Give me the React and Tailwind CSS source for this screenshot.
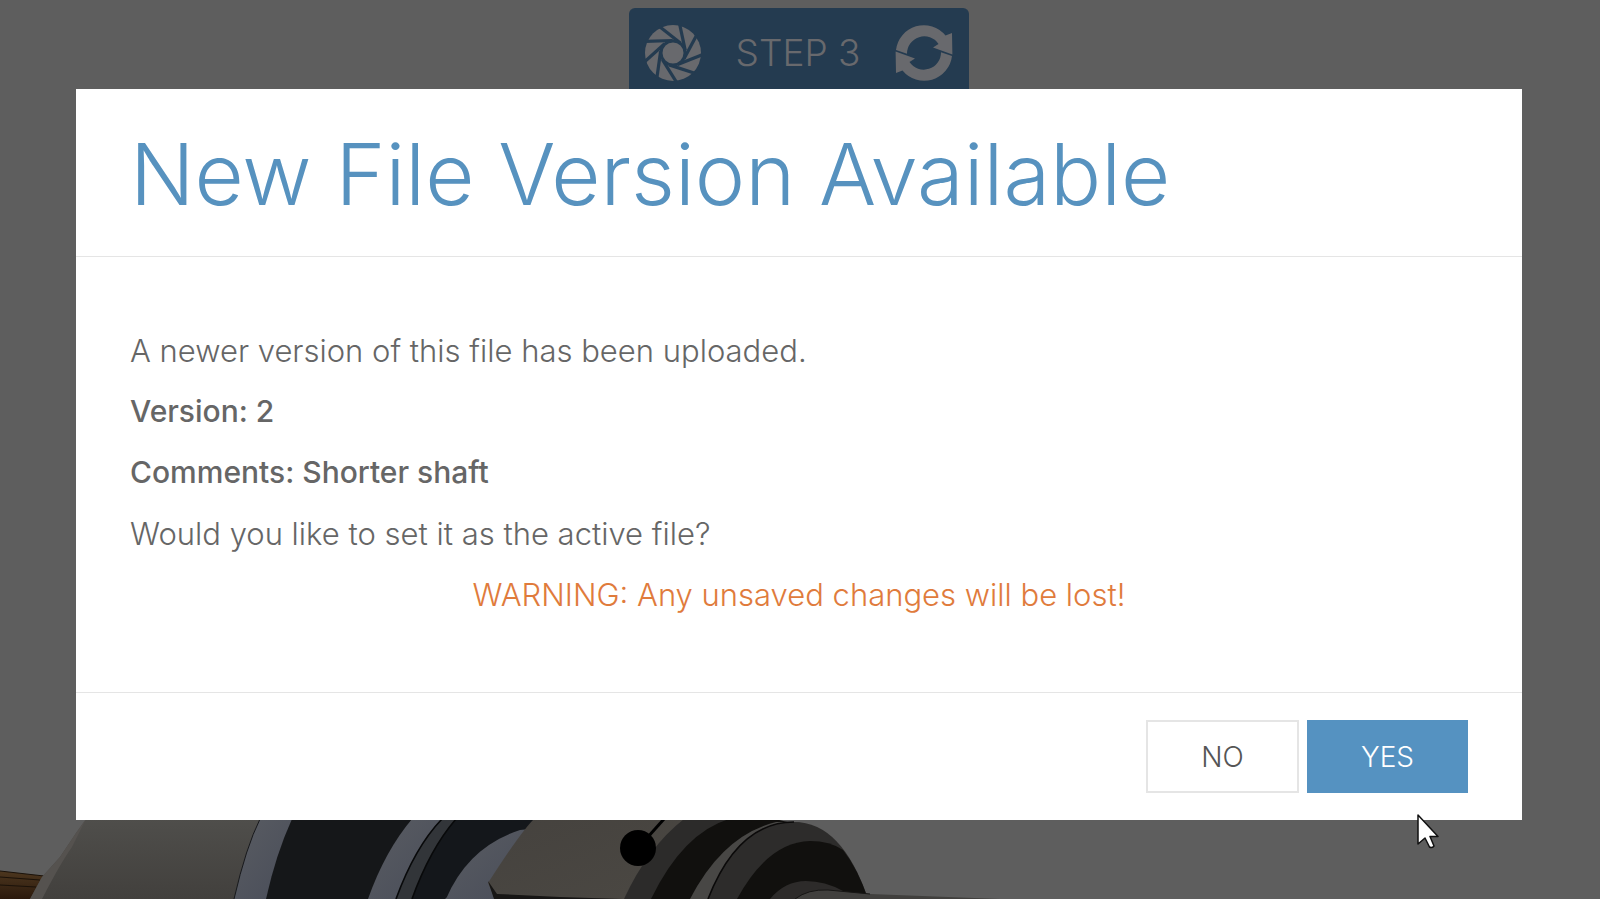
import { useState } from "react";

const BLADES = [0, 40, 80, 120, 160, 200, 240, 280, 320];

function ShutterIcon() {
  return (
    <svg viewBox="-28 -28 56 56" className="w-14 h-14" aria-hidden="true">
      <circle r="28" fill="#68696d" />
      <g stroke="#243b50" strokeWidth="3.2">
        {BLADES.map((deg) => (
          <line key={deg} x1="0" y1="-12.5" x2="-27" y2="-12.5" transform={`rotate(${deg - 2})`} />
        ))}
      </g>
      <circle r="12" fill="#68696d" stroke="#243b50" strokeWidth="3" />
    </svg>
  );
}

function RefreshIcon() {
  const arrow =
    "M-28 -3 A28 28 0 0 1 21.5 -17.5 L28 -20 L28.4 1.6 L9 -5.4 L14.5 -9 A17.2 17.2 0 0 0 -17 0.8 Z";
  return (
    <svg viewBox="-29 -28 58 56" className="w-[58px] h-14" fill="#68696d" aria-hidden="true">
      <path d={arrow} />
      <path d={arrow} transform="rotate(180)" />
    </svg>
  );
}

// Motor model behind the dialog
function ModelView() {
  return (
    <svg viewBox="0 0 1000 80" className="absolute bottom-0 left-0 w-[1000px] h-20" aria-hidden="true">
      <defs>
        <linearGradient id="body" x1="0" y1="0" x2="0" y2="1">
          <stop offset="0" stopColor="#4f4e4b" />
          <stop offset="1" stopColor="#42403d" />
        </linearGradient>
        <linearGradient id="steel" x1="0" y1="0" x2="1" y2="1">
          <stop offset="0" stopColor="#595c62" />
          <stop offset="1" stopColor="#494d59" />
        </linearGradient>
        <linearGradient id="hex" x1="0" y1="0" x2="1" y2="1">
          <stop offset="0" stopColor="#45423e" />
          <stop offset="1" stopColor="#4b4843" />
        </linearGradient>
        <linearGradient id="rod" x1="0" y1="0" x2="0" y2="1">
          <stop offset="0" stopColor="#4d371f" />
          <stop offset="1" stopColor="#2b190c" />
        </linearGradient>
      </defs>
      <path d="M0 52 L44 57 L36 80 L0 80 Z" fill="url(#rod)" />
      <path d="M0 52 L44 57 M0 58 L40 61 M0 66 L36 68" stroke="#1b120a" fill="none" />
      <path d="M86 0 L76 14 L60 38 L42 58 L30 80 L240 80 L264 0 Z" fill="url(#body)" />
      <path d="M86 0 L76 14 L60 38 L42 58 L30 80 L42 80 Q60 45 72 28 Z" fill="#55524f" />
      <path d="M260 0 Q246 28 234 80 L268 80 L294 0 Z" fill="url(#steel)" />
      <path d="M260 0 Q246 28 234 80" stroke="#17181b" fill="none" />
      <path d="M292 0 Q276 35 266 80 L370 80 L415 0 Z" fill="#151719" />
      <path d="M412 0 Q385 32 368 80 L400 80 L445 0 Z" fill="url(#steel)" />
      <path d="M442 0 Q415 28 396 80 L415 80 L460 0 Z" fill="#323539" />
      <path d="M456 0 Q430 30 412 80 L445 80 L540 0 Z" fill="#14171b" />
      <path d="M442 0 Q415 28 396 80 M456 0 Q430 30 412 80" stroke="#08090a" strokeWidth="1.6" fill="none" />
      <path d="M520 11 Q468 28 446 80 L500 80 L530 10 Z" fill="url(#steel)" />
      <path d="M534 0 Q520 14 488 64 L495 80 L640 80 L690 0 Z" fill="url(#hex)" />
      <path d="M488 62 L497 75 L560 78 L622 80 L494 80 Z" fill="#171615" />
      <path d="M684 0 Q648 28 624 80 L655 80 L730 0 Z" fill="#2c2b2a" />
      <path d="M729 0 Q683 14 651 80 L695 80 L800 6 L775 0 Z" fill="#11100e" />
      <path d="M776 3 Q723 16 690 80 L712 80 L800 3 Z" fill="#484745" />
      <path d="M708 80 Q738 3 794 3 Q842 3 868 80 Z" fill="#2d2c2b" />
      <path d="M708 80 Q738 3 794 3" stroke="#0b0a0a" strokeWidth="1.6" fill="none" />
      <path d="M737 80 Q768 23 810 22 Q830 22 843 31 Q858 50 868 80 Z" fill="#11100e" />
      <path d="M770 80 Q785 62 806 62 Q825 62 843 72 L860 80 Z" fill="#2d2b2a" />
      <path d="M795 80 Q808 70 828 71 L870 75 L1000 80 Z" fill="#41403e" />
      <path d="M795 80 Q808 70 828 71 L870 75" stroke="#171615" fill="none" />
      <path d="M638 29 L664 0" stroke="#000" strokeWidth="3" />
      <circle cx="638" cy="29" r="18" fill="#000" />
    </svg>
  );
}

function Cursor() {
  return (
    <svg viewBox="0 0 22 35" className="absolute left-[1417px] top-[814px] w-[22px] h-[35px]" aria-hidden="true">
      <path
        d="M1 1 V30 L8 24 L12.5 33 Q15 34.500 17 32 L13 22.500 H21 Z"
        fill="#fff"
        stroke="#111"
        strokeWidth="1.5"
        strokeLinejoin="round"
      />
    </svg>
  );
}

export default function App() {
  const [open, setOpen] = useState(true);

  return (
    <div className="relative h-screen overflow-hidden bg-[#5e5e5e] font-['Inter',sans-serif]">
      <ModelView />

      <header className="flex justify-center pt-2 pr-0.5">
        <div className="flex justify-between items-center w-[340px] h-[90px] px-4 rounded-md bg-[#243b50] text-[#68696d]">
          <ShutterIcon />
          <span className="text-[37px] font-light">STEP 3</span>
          <RefreshIcon />
        </div>
      </header>

      {open && (
        <div className="fixed inset-0 pl-[76px] pr-[78px] pt-[89px]">
          <div role="dialog" aria-labelledby="dialog-title" className="bg-white text-[#666]">
            <div className="px-[54px] pt-[34px] pb-[30px] border-b border-[#e5e5e5]">
              <h1 id="dialog-title" className="text-[85px] leading-[103px] font-light text-[#5792bf]">
                New File Version Available
              </h1>
            </div>

            <div className="flex flex-col gap-5 px-[54px] pt-[73px] pb-[77px] text-[31px] leading-[41px] font-light">
              <p>A newer version of this file has been uploaded.</p>
              <p className="text-[30px] leading-[41px] font-medium">Version: 2</p>
              <p className="text-[30px] leading-[41px] font-medium">Comments: Shorter shaft</p>
              <p>Would you like to set it as the active file?</p>
              <p className="text-center text-[#e07b3c]">WARNING: Any unsaved changes will be lost!</p>
            </div>

            <div className="flex justify-end gap-2 px-[54px] py-[27px] border-t border-[#e5e5e5] text-[28px] font-light">
              <button
                type="button"
                onClick={() => setOpen(false)}
                className="w-[153px] h-[73px] border-2 border-[#e5e5e5] text-[#555]"
              >
                NO
              </button>
              <button
                type="button"
                onClick={() => setOpen(false)}
                className="w-[161px] h-[73px] bg-[#5592c1] text-white"
              >
                YES
              </button>
            </div>
          </div>
        </div>
      )}

      <Cursor />
    </div>
  );
}
